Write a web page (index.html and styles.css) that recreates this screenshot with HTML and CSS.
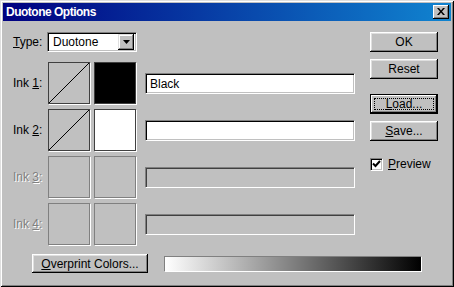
FILE: index.html
```html
<!DOCTYPE html>
<html>
<head>
<meta charset="UTF-8">
<title>Duotone Options</title>
<link rel="stylesheet" href="styles.css">
</head>
<body>
<div class="window">
	<div class="titlebar">
		<span class="title">Duotone Options</span>
		<span class="close">
			<svg width="8" height="7" viewBox="0 0 8 7"><path d="M0 0h2l2 2.5 2-2.5h2l-3 3.5 3 3.5h-2l-2-2.5-2 2.5h-2l3-3.5z" fill="#000"/></svg>
		</span>
	</div>
	<div class="main">
		<div class="left">
			<div class="typerow">
				<span class="label"><u>T</u>ype:</span>
				<div class="select">
					<span class="value">Duotone</span>
					<span class="arrow"><svg width="7" height="4" viewBox="0 0 7 4"><path d="M0 0h7l-3.5 4z" fill="#000"/></svg></span>
				</div>
			</div>
			<div class="ink">
				<span class="label">Ink <u>1</u>:</span>
				<div class="swatch curve"><svg viewBox="0 0 40 40" preserveAspectRatio="none"><line x1="0" y1="40" x2="40" y2="0" stroke="#000" stroke-width="1"/></svg></div>
				<div class="swatch black"></div>
				<div class="field">Black</div>
			</div>
			<div class="ink">
				<span class="label">Ink <u>2</u>:</span>
				<div class="swatch curve"><svg viewBox="0 0 40 40" preserveAspectRatio="none"><line x1="0" y1="40" x2="40" y2="0" stroke="#000" stroke-width="1"/></svg></div>
				<div class="swatch white"></div>
				<div class="field"></div>
			</div>
			<div class="ink off">
				<span class="label">Ink <u>3</u>:</span>
				<div class="swatch"></div>
				<div class="swatch"></div>
				<div class="field"></div>
			</div>
			<div class="ink off">
				<span class="label">Ink <u>4</u>:</span>
				<div class="swatch"></div>
				<div class="swatch"></div>
				<div class="field"></div>
			</div>
		</div>
		<div class="right">
			<div class="btn">OK</div>
			<div class="btn">Reset</div>
			<div class="btn focus"><span><u>L</u>oad...</span></div>
			<div class="btn"><u>S</u>ave...</div>
			<div class="check">
				<span class="box"><svg width="9" height="9" viewBox="0 0 9 9"><path d="M1 3.5l2.5 2.5 4.5-5" fill="none" stroke="#000" stroke-width="2"/></svg></span>
				<span><u>P</u>review</span>
			</div>
		</div>
		<div class="bottom">
			<div class="btn wide"><u>O</u>verprint Colors...</div>
			<div class="ramp"></div>
		</div>
	</div>
</div>
</body>
</html>
```

FILE: styles.css
```css
* {
	margin: 0;
	padding: 0;
	box-sizing: border-box;
}
body {
	font-family: "Liberation Sans", Arial, sans-serif;
	font-size: 12px;
	color: #000;
	background: #c0c0c0;
}
.window {
	width: 454px;
	height: 287px;
	background: #c0c0c0;
	box-shadow: inset 1px 1px #dfdfdf, inset -1px -1px #000, inset 2px 2px #fff, inset -2px -2px #808080;
	padding: 3px;
}
.titlebar {
	height: 18px;
	background: linear-gradient(to right, #000080, #1084d0);
	display: flex;
	align-items: center;
	justify-content: space-between;
	padding: 0 2px 0 3px;
}
.title {
	color: #fff;
	font-weight: bold;
	font-size: 12px;
	letter-spacing: -0.5px;
}
.close {
	width: 16px;
	height: 14px;
	background: #c0c0c0;
	box-shadow: inset -1px -1px #000, inset 1px 1px #fff, inset -2px -2px #808080;
	display: flex;
	align-items: center;
	justify-content: center;
	padding-bottom: 1px;
}
.main {
	display: grid;
	grid-template-columns: 342px 68px;
	column-gap: 15px;
	padding: 11px 0 0 10px;
}
.left {
	display: flex;
	flex-direction: column;
	gap: 5px;
}
.typerow {
	display: flex;
	align-items: center;
	height: 20px;
	margin-bottom: 5px;
}
.typerow .label {
	width: 34px;
}
.select {
	width: 90px;
	height: 20px;
	background: #fff;
	border: 1px solid;
	border-color: #808080 #fff #fff #808080;
	box-shadow: inset 1px 1px #000, inset -1px -1px #c0c0c0;
	display: flex;
	align-items: center;
	justify-content: space-between;
	padding: 2px;
}
.select .value {
	padding-left: 3px;
}
.select .arrow {
	width: 16px;
	height: 16px;
	background: #c0c0c0;
	box-shadow: inset -1px -1px #000, inset 1px 1px #dfdfdf, inset -2px -2px #808080, inset 2px 2px #fff;
	display: flex;
	align-items: center;
	justify-content: center;
}
.ink {
	display: flex;
	align-items: center;
	height: 42px;
}
.ink .label {
	width: 35px;
}
.swatch {
	width: 42px;
	height: 42px;
	margin-right: 4px;
	border: 1px solid #404040;
	box-shadow: 1px 1px 0 #fff;
}
.swatch svg {
	display: block;
	width: 100%;
	height: 100%;
}
.swatch.black {
	background: #000;
}
.swatch.white {
	background: #fff;
}
.field {
	width: 210px;
	height: 21px;
	margin-left: 5px;
	background: #fff;
	border: 1px solid;
	border-color: #808080 #fff #fff #808080;
	box-shadow: inset 1px 1px #000, inset -1px -1px #c0c0c0;
	padding: 3px 4px;
	line-height: 14px;
}
.off .label {
	color: #808080;
	text-shadow: 1px 1px 0 #fff;
}
.off .swatch {
	border-color: #808080;
}
.off .field {
	background: #c0c0c0;
	box-shadow: inset 1px 1px #404040, inset -1px -1px #c0c0c0;
}
.right {
	display: flex;
	flex-direction: column;
	align-items: flex-start;
}
.btn {
	width: 68px;
	height: 20px;
	background: #c0c0c0;
	box-shadow: inset -1px -1px #000, inset 1px 1px #fff, inset -2px -2px #808080, inset 2px 2px #dfdfdf;
	display: flex;
	align-items: center;
	justify-content: center;
	margin-bottom: 7px;
}
.btn:nth-child(2) {
	margin-bottom: 15px;
}
.btn.focus {
	border: 1px solid #000;
	box-shadow: inset -1px -1px #000, inset 1px 1px #fff, inset -2px -2px #808080;
	padding: 3px;
}
.btn.focus span {
	flex: 1;
	align-self: stretch;
	outline: 1px dotted #000;
	outline-offset: -1px;
	display: flex;
	align-items: center;
	justify-content: center;
}
.check {
	display: flex;
	align-items: center;
	margin-top: 9px;
	gap: 5px;
}
.check .box {
	width: 13px;
	height: 13px;
	background: #fff;
	border: 1px solid;
	border-color: #808080 #fff #fff #808080;
	box-shadow: inset 1px 1px #000, inset -1px -1px #c0c0c0;
	display: flex;
	align-items: center;
	justify-content: center;
}
.bottom {
	grid-column: 1 / 3;
	display: flex;
	align-items: center;
	margin-top: 9px;
	padding-left: 19px;
}
.btn.wide {
	width: 116px;
	height: 19px;
	margin-bottom: 0;
}
.ramp {
	width: 258px;
	height: 16px;
	margin-left: 16px;
	background: linear-gradient(to right, #fff, #000);
	border: 1px solid;
	border-color: #808080 #fff #fff #808080;
}
```
